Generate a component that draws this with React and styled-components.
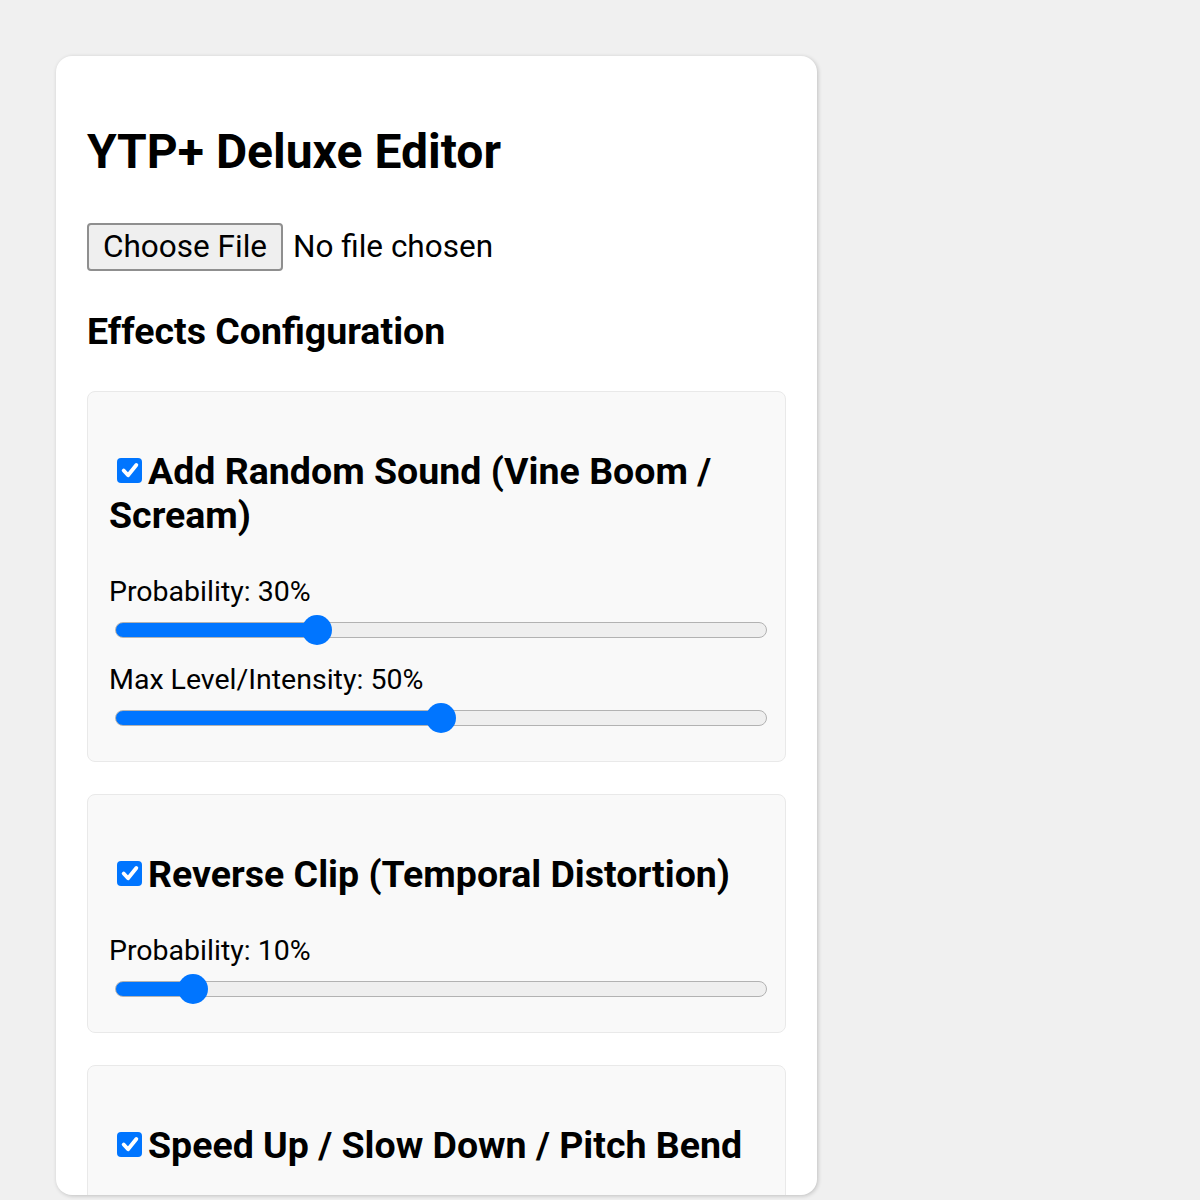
import { useState } from 'react'
import styled, { createGlobalStyle } from 'styled-components'

const GlobalStyle = createGlobalStyle`
    html, body {
        margin: 0;
        padding: 0;
        background: #f0f0f0;
        font-family: Roboto, 'Noto Sans', Arial, sans-serif;
        color: #000;
    }
`

const effectsData = [
    {
        id: 'sound',
        title: 'Add Random Sound (Vine Boom / Scream)',
        sliders: [
            { id: 'prob', label: 'Probability', value: 30 },
            { id: 'level', label: 'Max Level/Intensity', value: 50 },
        ],
    },
    {
        id: 'reverse',
        title: 'Reverse Clip (Temporal Distortion)',
        sliders: [{ id: 'prob', label: 'Probability', value: 10 }],
    },
    {
        id: 'speed',
        title: 'Speed Up / Slow Down / Pitch Bend',
        sliders: [{ id: 'prob', label: 'Probability', value: 20 }],
    },
]

const Slider = ({ value, onChange }) => (
    <Range
        type="range"
        min="0"
        max="100"
        value={value}
        onChange={(e) => onChange(Number(e.target.value))}
        style={{ '--fill': `calc(15px + ${value / 100} * (100% - 30px))` }}
    />
)

const EffectCard = ({ effect }) => {
    const [enabled, setEnabled] = useState(true)
    const [values, setValues] = useState(effect.sliders.map((s) => s.value))

    return (
        <Card>
            <CardTitle>
                <CheckBox $checked={enabled} onClick={() => setEnabled(!enabled)}>
                    {enabled && (
                        <svg viewBox="0 0 16 16" width="22" height="22">
                            <path d="M3.4 8.4 L6.6 11.8 L12.6 4.4" fill="none" stroke="#fff" strokeWidth="2.8" strokeLinecap="round" strokeLinejoin="round" />
                        </svg>
                    )}
                </CheckBox>
                {effect.title}
            </CardTitle>
            {effect.sliders.map((s, i) => (
                <SliderGroup key={s.id}>
                    <SliderLabel>{s.label}: {values[i]}%</SliderLabel>
                    <Slider
                        value={values[i]}
                        onChange={(v) => setValues(values.map((old, j) => (j === i ? v : old)))}
                    />
                </SliderGroup>
            ))}
        </Card>
    )
}

const App = () => {
    return (
        <>
            <GlobalStyle />
            <Page>
                <Container>
                    <Title>YTP+ Deluxe Editor</Title>
                    <FileRow>
                        <FileButton>
                            Choose File
                            <input type="file" hidden />
                        </FileButton>
                        <FileName>No file chosen</FileName>
                    </FileRow>
                    <SectionTitle>Effects Configuration</SectionTitle>
                    <CardList>
                        {effectsData.map((effect) => (
                            <EffectCard key={effect.id} effect={effect} />
                        ))}
                    </CardList>
                </Container>
            </Page>
        </>
    )
}

export default App

const Page = styled.div`
    padding: 56px 0 0 56px;
    height: 100vh;
    box-sizing: border-box;
`

const Container = styled.div`
    width: 761px;
    height: 1139px;
    box-sizing: border-box;
    padding: 38px 31px 0 31px;
    background: #fff;
    border-radius: 16px;
    box-shadow: 1px 1px 4px rgba(0, 0, 0, 0.2);
    overflow: hidden;
`

const Title = styled.h1`
    margin: 30px 0 0;
    font-size: 48px;
    line-height: 56px;
    font-weight: 700;
`

const FileRow = styled.div`
    display: flex;
    align-items: center;
    gap: 10px;
    margin-top: 43px;
    height: 48px;
`

const FileButton = styled.label`
    display: flex;
    align-items: center;
    height: 48px;
    box-sizing: border-box;
    padding: 0 14px;
    background: #efefef;
    border: 2px solid #8f8f8f;
    border-radius: 4px;
    font-size: 31.5px;
    line-height: 40px;
    cursor: pointer;
`

const FileName = styled.span`
    font-size: 31.5px;
    line-height: 40px;
`

const SectionTitle = styled.h2`
    margin: 39px 0 0;
    font-size: 37.5px;
    line-height: 42px;
    font-weight: 700;
`

const CardList = styled.div`
    display: flex;
    flex-direction: column;
    gap: 32px;
    margin-top: 39px;
`

const Card = styled.div`
    background: #f9f9f9;
    border: 1px solid #e9e9e9;
    border-radius: 8px;
    padding: 57px 21px 28px;
`

const CardTitle = styled.h3`
    margin: 0 0 38px;
    font-size: 37.5px;
    line-height: 44px;
    font-weight: 700;
`

const CheckBox = styled.span`
    display: inline-flex;
    align-items: center;
    justify-content: center;
    width: 25px;
    height: 25px;
    margin: 0 6px 0 8px;
    vertical-align: 3px;
    box-sizing: border-box;
    border-radius: 4px;
    background: ${(p) => (p.$checked ? '#0075ff' : '#fff')};
    border: ${(p) => (p.$checked ? 'none' : '2px solid #767676')};
    cursor: pointer;
`

const SliderGroup = styled.div`
    & + & {
        margin-top: 18px;
    }
`

const SliderLabel = styled.div`
    font-size: 28.5px;
    line-height: 34px;
    margin-bottom: 6px;
`

const Range = styled.input`
    -webkit-appearance: none;
    appearance: none;
    display: block;
    width: 652px;
    height: 30px;
    margin: 0 0 0 6px;
    background: transparent;
    cursor: pointer;

    &::-webkit-slider-runnable-track {
        height: 16px;
        box-sizing: border-box;
        border: 1px solid #b2b2b2;
        border-radius: 8px;
        background: linear-gradient(to right, #0075ff 0, #0075ff var(--fill), #efefef var(--fill));
    }

    &::-webkit-slider-thumb {
        -webkit-appearance: none;
        width: 30px;
        height: 30px;
        margin-top: -8px;
        border-radius: 50%;
        background: #0075ff;
        border: none;
    }
`
